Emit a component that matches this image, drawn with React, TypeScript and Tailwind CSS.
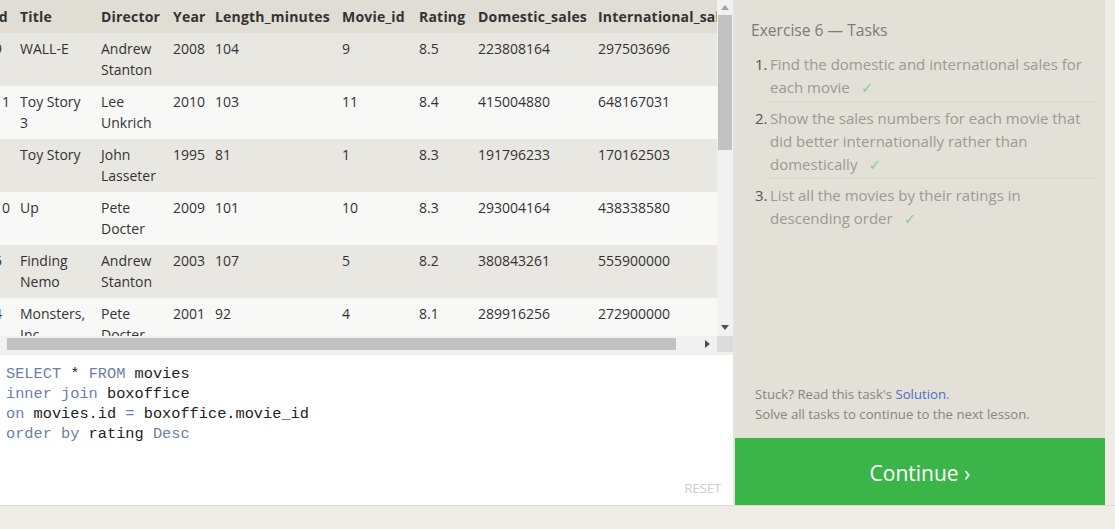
import React from 'react';

type Movie = {
  id: number;
  title: string;
  director: string;
  year: number;
  length: number;
  rating: string;
  domestic: number;
  international: number;
};

const movies: Movie[] = [
  { id: 9, title: 'WALL-E', director: 'Andrew Stanton', year: 2008, length: 104, rating: '8.5', domestic: 223808164, international: 297503696 },
  { id: 11, title: 'Toy Story 3', director: 'Lee Unkrich', year: 2010, length: 103, rating: '8.4', domestic: 415004880, international: 648167031 },
  { id: 1, title: 'Toy Story', director: 'John Lasseter', year: 1995, length: 81, rating: '8.3', domestic: 191796233, international: 170162503 },
  { id: 10, title: 'Up', director: 'Pete Docter', year: 2009, length: 101, rating: '8.3', domestic: 293004164, international: 438338580 },
  { id: 5, title: 'Finding Nemo', director: 'Andrew Stanton', year: 2003, length: 107, rating: '8.2', domestic: 380843261, international: 555900000 },
  { id: 4, title: 'Monsters, Inc.', director: 'Pete Docter', year: 2001, length: 92, rating: '8.1', domestic: 289916256, international: 272900000 },
  { id: 6, title: 'The Incredibles', director: 'Brad Bird', year: 2004, length: 116, rating: '8', domestic: 261441092, international: 370001000 },
];

const tasks = [
  'Find the domestic and international sales for each movie',
  'Show the sales numbers for each movie that did better internationally rather than domestically',
  'List all the movies by their ratings in descending order',
];

function Arrow({ dir, className }: { dir: 'up' | 'down' | 'right'; className: string }) {
  const points = dir === 'up' ? '0,5 4,0 8,5' : dir === 'down' ? '0,0 8,0 4,5' : '0,0 5,4 0,8';
  const size = dir === 'right' ? { w: 5, h: 8 } : { w: 8, h: 5 };
  return (
    <svg width={size.w} height={size.h} viewBox={`0 0 ${size.w} ${size.h}`} className={className}>
      <polygon points={points} fill="currentColor" />
    </svg>
  );
}

function ResultsTable() {
  return (
    <div className="h-[336px] overflow-hidden bg-[#f8f8f7]">
      <table className="table-fixed border-collapse w-[760px] -ml-[11px] text-[14px] leading-[21px] text-[#333] text-left">
        <thead>
          <tr className="bg-[#dfddd4] h-[33px] tracking-[0.2px]">
            <th className="w-[26px] px-[5px] font-bold">Id</th>
            <th className="w-[81px] px-[5px] font-bold">Title</th>
            <th className="w-[72px] px-[5px] font-bold">Director</th>
            <th className="w-[42px] px-[5px] font-bold">Year</th>
            <th className="w-[127px] px-[5px] font-bold">Length_minutes</th>
            <th className="w-[77px] px-[5px] font-bold">Movie_id</th>
            <th className="w-[59px] px-[5px] font-bold">Rating</th>
            <th className="w-[120px] px-[5px] font-bold">Domestic_sales</th>
            <th className="w-[156px] px-[5px] font-bold whitespace-nowrap">International_sales</th>
          </tr>
        </thead>
        <tbody>
          {movies.map((m, i) => (
            <tr key={m.id} className={i % 2 === 0 ? 'bg-[#e9e7e1] h-[53px] align-top' : 'bg-[#f8f8f7] h-[53px] align-top'}>
              <td className="px-[5px] pt-[5px]">{m.id}</td>
              <td className="px-[5px] pt-[5px]">{m.title}</td>
              <td className="px-[5px] pt-[5px]">{m.director}</td>
              <td className="px-[5px] pt-[5px]">{m.year}</td>
              <td className="px-[5px] pt-[5px]">{m.length}</td>
              <td className="px-[5px] pt-[5px]">{m.id}</td>
              <td className="px-[5px] pt-[5px]">{m.rating}</td>
              <td className="px-[5px] pt-[5px]">{m.domestic}</td>
              <td className="px-[5px] pt-[5px]">{m.international}</td>
            </tr>
          ))}
        </tbody>
      </table>
    </div>
  );
}

function App() {
  return (
    <div className="w-[1115px] h-[529px] overflow-hidden bg-[#efece6] font-['Open_Sans',sans-serif]">
      <div className="flex h-[505px]">
        {/* Left: results + editor */}
        <div className="w-[733px] flex flex-col">
          <div className="flex h-[352px]">
            <div className="w-[717px] flex flex-col">
              <ResultsTable />
              {/* horizontal scrollbar */}
              <div className="h-[16px] bg-[#f1f1f1] flex items-center">
                <div className="ml-[7px] w-[669px] h-[12px] bg-[#c1c1c1]" />
                <div className="flex-1 flex justify-end pr-[7px]">
                  <Arrow dir="right" className="text-[#505050]" />
                </div>
              </div>
            </div>
            {/* vertical scrollbar */}
            <div className="w-[16px] flex flex-col">
              <div className="h-[336px] bg-[#f1f1f1] flex flex-col items-center">
                <div className="h-[15px] flex items-center justify-center">
                  <Arrow dir="up" className="text-[#a3a3a3]" />
                </div>
                <div className="w-[14px] h-[135px] bg-[#c1c1c1]" />
                <div className="flex-1" />
                <div className="h-[18px] flex items-center justify-center">
                  <Arrow dir="down" className="text-[#505050]" />
                </div>
              </div>
              <div className="h-[16px] bg-[#dcdcdc]" />
            </div>
          </div>
          <div className="h-[3px] bg-[#f1efea]" />
          {/* editor */}
          <div className="flex-1 bg-white relative pl-[6px] pt-[9px] font-['Liberation_Mono',monospace] text-[15.3px] leading-[20px] text-[#222]">
            <div>
              <span className="text-[#6b7ea8]">SELECT</span> * <span className="text-[#6b7ea8]">FROM</span> movies
            </div>
            <div>
              <span className="text-[#6b7ea8]">inner join</span> boxoffice
            </div>
            <div>
              <span className="text-[#6b7ea8]">on</span> movies.id <span className="text-[#6b7ea8]">=</span> boxoffice.movie_id
            </div>
            <div>
              <span className="text-[#6b7ea8]">order by</span> rating <span className="text-[#6b7ea8]">Desc</span>
            </div>
            <div className="absolute right-[12px] bottom-[9px] font-['Open_Sans',sans-serif] text-[13.5px] leading-[16px] text-[#cfcfcf] tracking-[-0.3px]">
              RESET
            </div>
          </div>
        </div>

        <div className="w-[2px] bg-[#e6e3dc]" />

        {/* Right: tasks */}
        <div className="w-[370px] flex flex-col">
          <div className="flex-1 bg-[#e2e0d7] flex flex-col justify-between pl-[16px] pr-[8px] pt-[18px] pb-[14px]">
            <div>
              <h2 className="text-[15.6px] leading-[24px] text-[#7b7b7b] font-normal">Exercise 6 — Tasks</h2>
              <ol className="mt-[11px] ml-[4px] text-[15px] leading-[23px]">
                {tasks.map((t, i) => (
                  <li key={t} className="flex pt-[5px] first:pt-0">
                    <span className="w-[15px] shrink-0 text-[#555]">{i + 1}.</span>
                    <span className={i < tasks.length - 1 ? 'flex-1 text-[#9b9a95] pb-[1px] border-b border-[#d8d6cd]' : 'flex-1 text-[#9b9a95]'}>
                      {t}
                      <span className="ml-[11px] text-[#8ccf94] font-['DejaVu_Sans',sans-serif] text-[15px]">✓</span>
                    </span>
                  </li>
                ))}
              </ol>
            </div>
            <div className="pl-[4px] text-[13.2px] leading-[20px] text-[#858585]">
              <p>
                Stuck? Read this task's <span className="text-[#4e6bcf]">Solution</span>.
              </p>
              <p>Solve all tasks to continue to the next lesson.</p>
            </div>
          </div>
          <button className="h-[67px] bg-[#3bb54a] text-white text-[21px] leading-[28px] text-center pt-[3px]">
            Continue ›
          </button>
        </div>
      </div>
      <div className="h-[24px] border-t border-[#dedbd2]" />
    </div>
  );
}

export default App;
